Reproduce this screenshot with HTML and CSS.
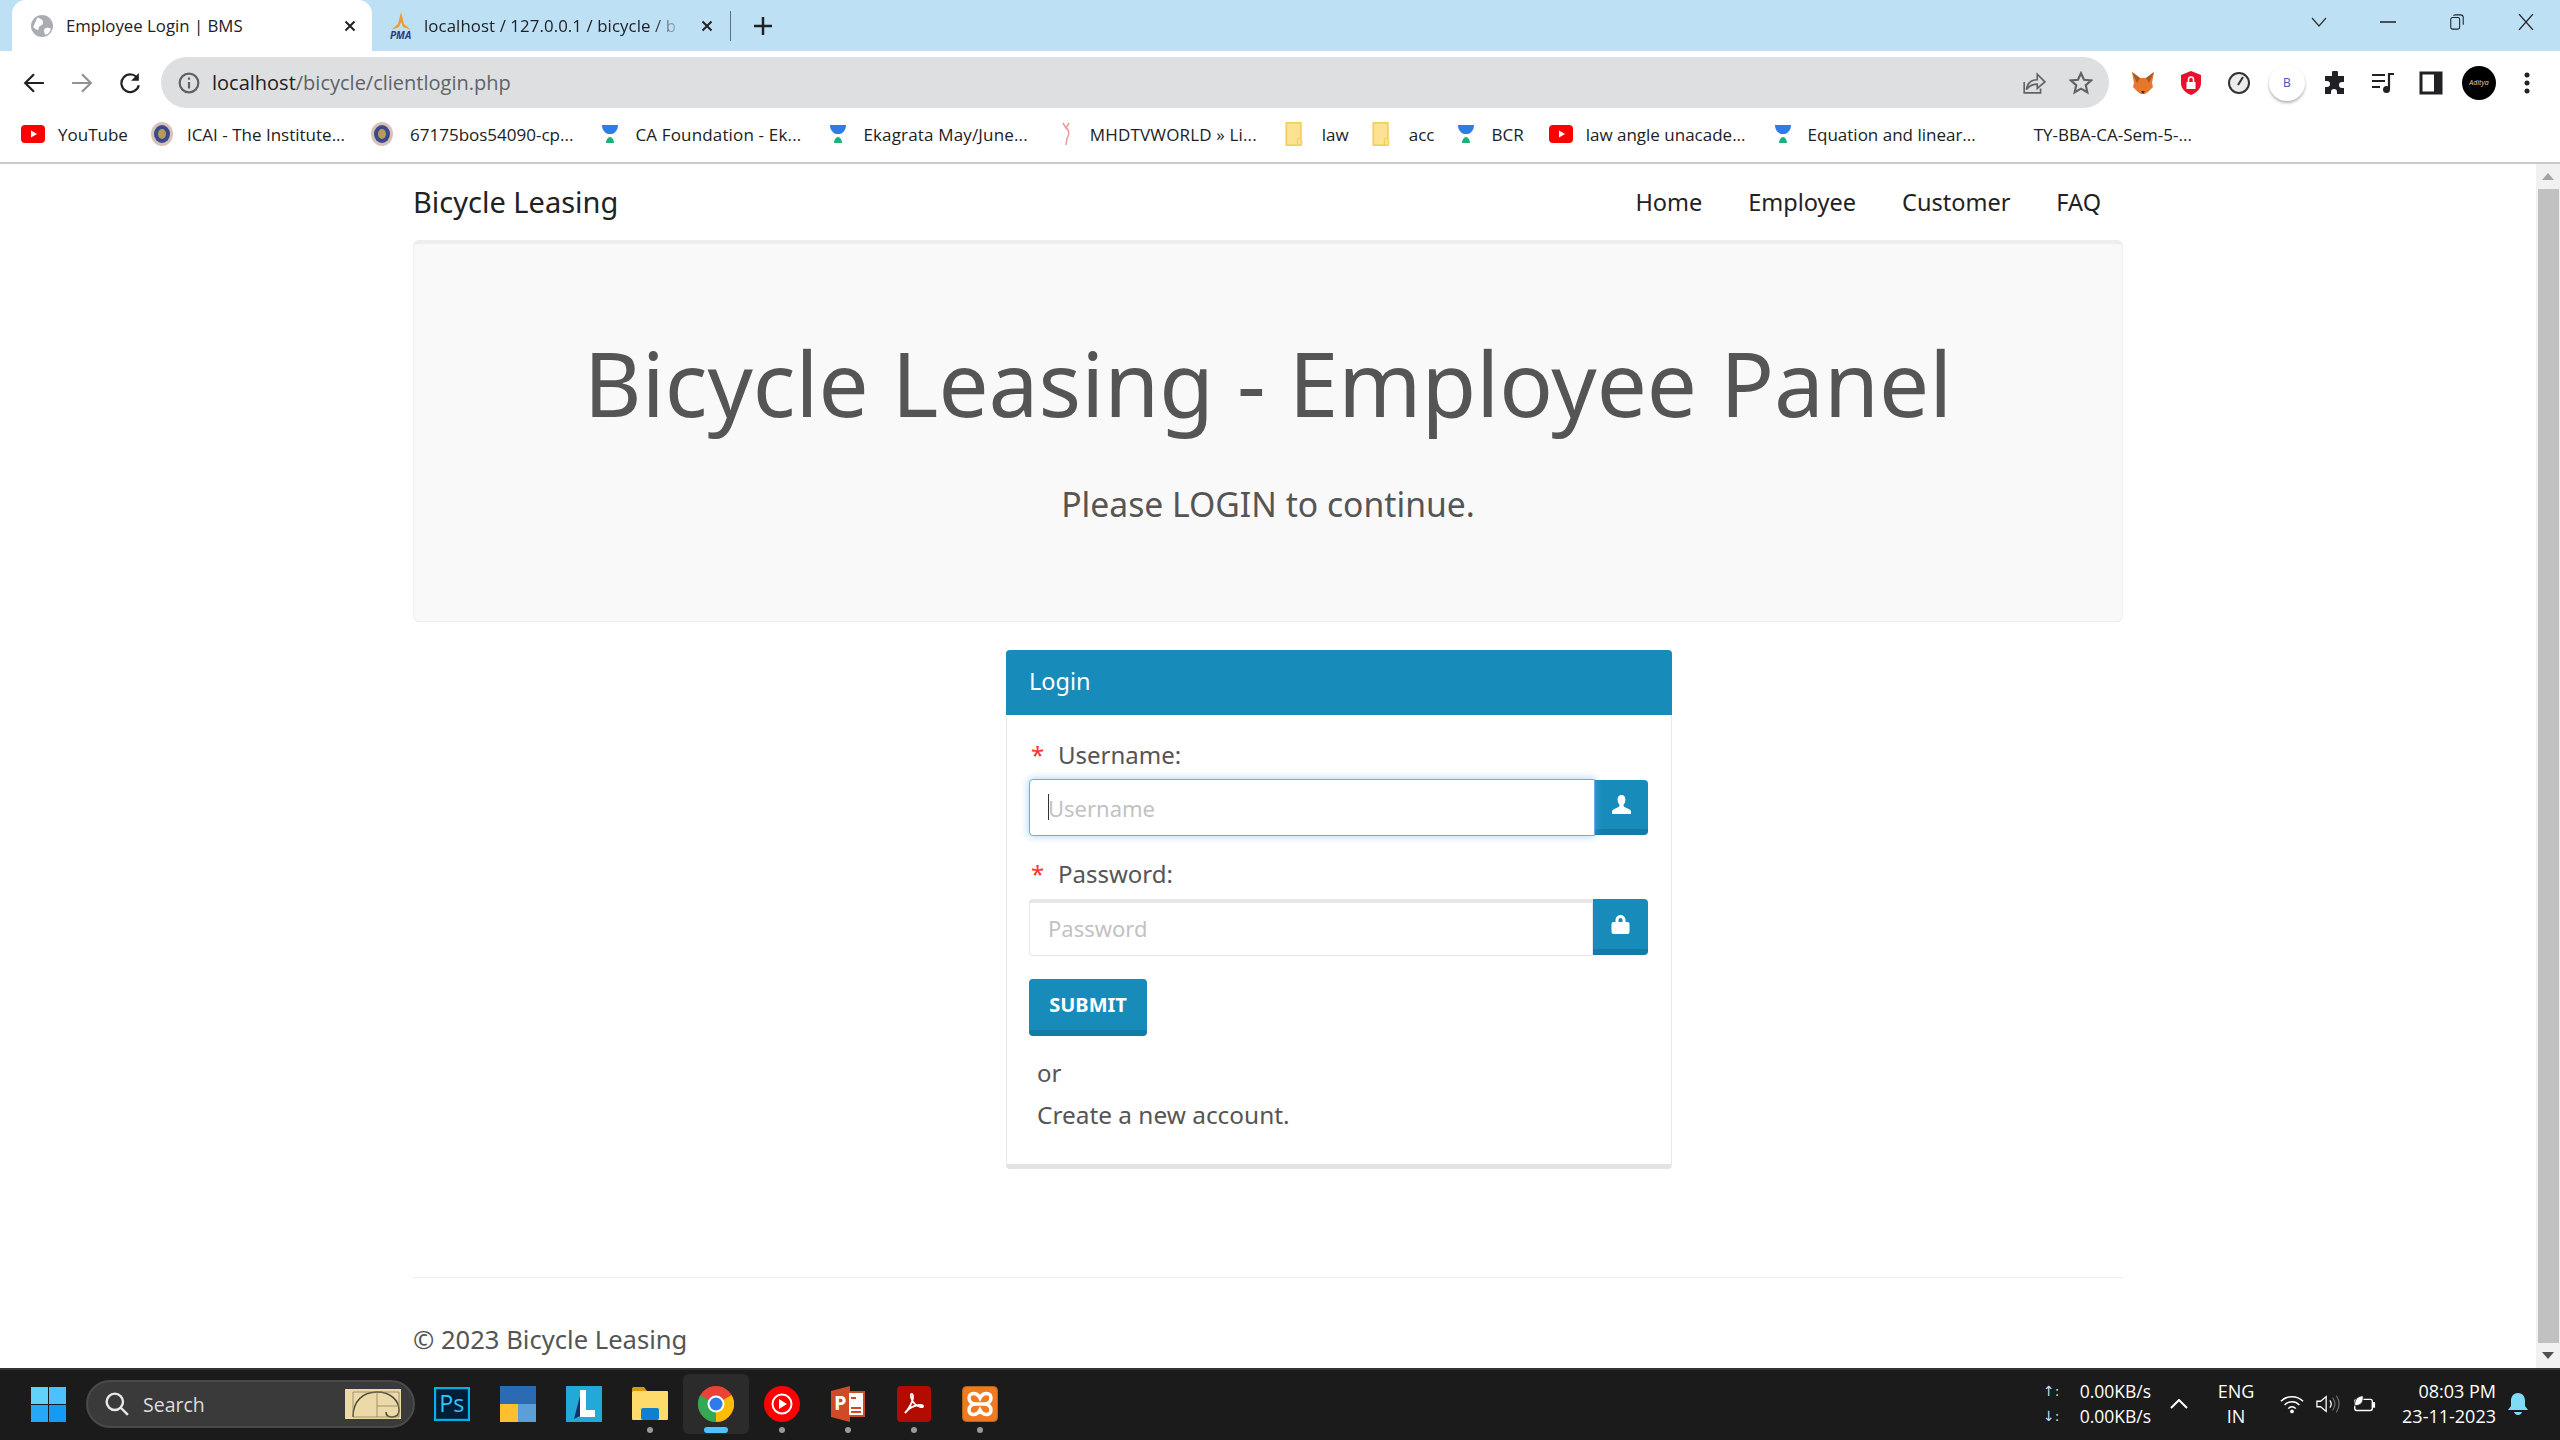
FILE: index.html
```html
<!DOCTYPE HTML>
<html lang="en">
<head>
    <meta charset="UTF-8">
    <meta name="viewport" content="width=device-width, initial-scale=1.0">
    <title>Employee Login | BMS</title>
    <link rel="stylesheet" href="styles.css">
</head>
<body>
    <svg class="defs" width="0" height="0">
        <symbol id="yt" viewBox="0 0 24 24"><rect y="3" width="24" height="18" rx="4" fill="#f00"/><path d="M10 8.5l6 3.5-6 3.5z" fill="#fff"/></symbol>
        <symbol id="cup" viewBox="0 0 24 24"><path d="M4 3h16c0 5-3 8-6 9h-4C7 11 4 8 4 3z" fill="#2f7be8"/><path d="M8 21c0-3 2-6 4-6s4 3 4 6z" fill="#1cb07a"/></symbol>
        <symbol id="seal" viewBox="0 0 24 24"><ellipse cx="12" cy="12" rx="11" ry="12" fill="#d8c2b8"/><ellipse cx="12" cy="12" rx="8" ry="9" fill="#3b4a8a"/><ellipse cx="12" cy="12" rx="4" ry="5" fill="#b79a55"/></symbol>
        <symbol id="folder" viewBox="0 0 20 28"><path d="M1 1h17v26H1z" fill="#fde293" stroke="#f2cf5e" stroke-width="2"/><rect x="14" y="19" width="5" height="8" rx="2" fill="#fde293" stroke="#f2cf5e" stroke-width="1.5"/></symbol>
    </svg>

    <div class="tabstrip">
        <div class="tab active">
            <svg class="favicon" viewBox="0 0 20 20"><circle cx="10" cy="10" r="10" fill="#a9adb2"/><path d="M6 2c3 2 5 2 5 5s-4 2-4 5-3 1-5-1M13 12c3-1 5 0 5 1-1 3-3 5-5 5-1-2-2-5 0-6z" fill="#fff"/></svg>
            <span class="tab-title">Employee Login | BMS</span>
            <svg class="tab-x" viewBox="0 0 12 12"><path d="M1.5 1.5l9 9M10.5 1.5l-9 9" stroke="#202124" stroke-width="2"/></svg>
        </div>
        <div class="tab">
            <svg class="favicon pma" viewBox="0 0 24 28"><path d="M12 0l3 12 7 6-8-3-2-5-2 5-8 3 7-6z" fill="#f29a2e"/><text x="1" y="27" class="pma-text">PMA</text></svg>
            <span class="tab-title fade">localhost / 127.0.0.1 / bicycle / b</span>
            <svg class="tab-x" viewBox="0 0 12 12"><path d="M1.5 1.5l9 9M10.5 1.5l-9 9" stroke="#202124" stroke-width="2"/></svg>
        </div>
        <div class="tab-sep"></div>
        <svg class="new-tab" viewBox="0 0 18 18"><path d="M9 0v18M0 9h18" stroke="#202124" stroke-width="2.5"/></svg>
        <div class="win-controls">
            <svg viewBox="0 0 16 10"><path d="M1 1l7 8 7-8" fill="none" stroke="#333" stroke-width="1.2"/></svg>
            <svg viewBox="0 0 16 10"><path d="M0 5h16" stroke="#222" stroke-width="1.5"/></svg>
            <svg viewBox="0 0 16 18"><rect x="1" y="4" width="10" height="13" rx="2" fill="none" stroke="#222" stroke-width="1.2"/><path d="M4 2q0-1 2-1h6q3 0 3 3v8" fill="none" stroke="#222" stroke-width="1.2"/></svg>
            <svg viewBox="0 0 16 16"><path d="M1 0l14 16M15 0L1 16" stroke="#222" stroke-width="1.2"/></svg>
        </div>
    </div>

    <div class="toolbar">
        <svg class="nav-btn" viewBox="0 0 20 20"><path d="M19 10H3M10 2l-8 8 8 8" fill="none" stroke="#202124" stroke-width="2"/></svg>
        <svg class="nav-btn" viewBox="0 0 20 20"><path d="M1 10h16M10 2l8 8-8 8" fill="none" stroke="#8f9296" stroke-width="2"/></svg>
        <svg class="nav-btn" viewBox="0 0 20 20"><path d="M17 6a8 8 0 1 0 1 6" fill="none" stroke="#202124" stroke-width="2"/><path d="M18 1v7h-7z" fill="#202124"/></svg>
        <div class="addressbar">
            <svg class="info" viewBox="0 0 20 20"><circle cx="10" cy="10" r="8.5" fill="none" stroke="#5f6368" stroke-width="2"/><path d="M10 9v6M10 5v2" stroke="#5f6368" stroke-width="2"/></svg>
            <span class="url"><b>localhost</b>/bicycle/clientlogin.php</span>
            <svg class="addr-icon" viewBox="0 0 22 22"><path d="M2 10v10h15v-4" fill="none" stroke="#5f6368" stroke-width="1.5"/><path d="M4 17c1-6 5-9 10-9V3l7 7-7 6v-4c-4 0-7 1-10 5z" fill="none" stroke="#5f6368" stroke-width="1.5"/></svg>
            <svg class="addr-icon" viewBox="0 0 22 22"><path d="M11 2l2.8 6 6.4.7-4.8 4.3 1.4 6.5L11 16.2l-5.8 3.3 1.4-6.5L1.800 8.700 8.200 8z" fill="none" stroke="#5f6368" stroke-width="2"/></svg>
        </div>
        <div class="extensions">
            <svg viewBox="0 0 24 24"><path d="M1 1l8 6h6l8-6-2 11 1 4-5 5-3 2h-4l-3-2-5-5 1-4z" fill="#e8772b"/><path d="M1 1l8 6-3 5zM23 1l-8 6 3 5z" fill="#a65b24"/><path d="M10 20h4l-2 3z" fill="#333"/></svg>
            <svg viewBox="0 0 24 24"><path d="M12 0l10 4v8c0 6-5 10-10 12C7 22 2 18 2 12V4z" fill="#e8112d"/><rect x="7.500" y="11" width="9" height="7" fill="#fff"/><path d="M9.500 11V8.500a2.500 2.500 0 0 1 5 0V11" fill="none" stroke="#fff" stroke-width="1.500"/></svg>
            <svg viewBox="0 0 24 24"><circle cx="12" cy="12" r="10" fill="#ececec" stroke="#333" stroke-width="2"/><path d="M11 14l5-8" stroke="#333" stroke-width="2"/></svg>
            <span class="ext-b">B</span>
            <svg viewBox="0 0 24 24"><path d="M9 2a3 3 0 0 1 6 0v3h6v6h-2a3 3 0 0 0 0 6h2v6h-7v-2a3 3 0 0 0-6 0v2H2v-7h2a3 3 0 0 0 0-6H2V5h7z" fill="#202124"/></svg>
            <svg viewBox="0 0 24 24"><path d="M1 4h13M1 10h13M1 16h8" stroke="#202124" stroke-width="2.200"/><path d="M18 18V3h5" fill="none" stroke="#202124" stroke-width="2.200"/><circle cx="15.500" cy="18.500" r="3.500" fill="#202124"/></svg>
            <svg viewBox="0 0 24 24"><rect x="2" y="2" width="20" height="20" fill="#fff" stroke="#202124" stroke-width="3"/><rect x="15" y="2" width="7" height="20" fill="#202124"/></svg>
            <span class="avatar"><i>Aditya</i></span>
            <svg viewBox="0 0 24 24"><circle cx="12" cy="4" r="2.500" fill="#202124"/><circle cx="12" cy="12" r="2.500" fill="#202124"/><circle cx="12" cy="20" r="2.500" fill="#202124"/></svg>
        </div>
    </div>

    <div class="bookmarks">
        <span class="bm close"><svg><use href="#yt"/></svg>YouTube</span>
        <span class="bm"><svg><use href="#seal"/></svg>ICAI - The Institute...</span>
        <span class="bm loose"><svg><use href="#seal"/></svg>67175bos54090-cp...</span>
        <span class="bm spaced"><svg><use href="#cup"/></svg>CA Foundation - Ek...</span>
        <span class="bm spaced"><svg><use href="#cup"/></svg>Ekagrata May/June...</span>
        <span class="bm spaced"><svg viewBox="0 0 24 24"><path d="M10 1l3 5M16 1l-3 5c4 2 3 8 1 10l-1 7" fill="none" stroke="#ec9a9a" stroke-width="1.500"/></svg>MHDTVWORLD » Li...</span>
        <span class="bm folder"><svg><use href="#folder"/></svg>law</span>
        <span class="bm folder"><svg><use href="#folder"/></svg>acc</span>
        <span class="bm"><svg><use href="#cup"/></svg>BCR</span>
        <span class="bm"><svg><use href="#yt"/></svg>law angle unacade...</span>
        <span class="bm"><svg><use href="#cup"/></svg>Equation and linear...</span>
        <span class="bm blank"><svg></svg>TY-BBA-CA-Sem-5-...</span>
    </div>

    <div class="viewport">
        <div class="page">
            <nav class="navbar">
                <a class="brand">Bicycle Leasing</a>
                <ul class="nav-links">
                    <li>Home</li>
                    <li>Employee</li>
                    <li>Customer</li>
                    <li>FAQ</li>
                </ul>
            </nav>

            <div class="jumbotron">
                <h1>Bicycle Leasing - Employee Panel</h1>
                <p>Please LOGIN to continue.</p>
            </div>

            <div class="panel">
                <div class="panel-heading">Login</div>
                <div class="panel-body">
                    <label class="field-label"><span class="req">*</span>Username:</label>
                    <div class="input-group">
                        <div class="input-wrap">
                            <input class="form-input focused" type="text" placeholder="Username">
                            <span class="caret"></span>
                        </div>
                        <span class="addon">
                            <svg viewBox="0 0 19 19"><path d="M9.500 0c2.600 0 3.900 2 3.900 4.500 0 2.500-1 4.500-2 5.500 0 1.500 1 2 3 3 2.600 1 4.600 2 4.600 3.500V19H0v-2.500C0 15 2 14 4.600 13c2-1 3-1.500 3-3-1-1-2-3-2-5.500C5.600 2 6.900 0 9.500 0z" fill="#fff"/></svg>
                        </span>
                    </div>
                    <label class="field-label second"><span class="req">*</span>Password:</label>
                    <div class="input-group">
                        <div class="input-wrap">
                            <input class="form-input thick" type="password" placeholder="Password">
                        </div>
                        <span class="addon wide">
                            <svg viewBox="0 0 18 19"><path d="M4 7V5a5 5 0 0 1 10 0v2h2q2 0 2 2v8q0 2-2 2H2q-2 0-2-2V9q0-2 2-2zm3 0h4V5a2 2 0 0 0-4 0z" fill="#fff"/></svg>
                        </span>
                    </div>
                    <button class="btn-submit" type="button">SUBMIT</button>
                    <p class="or">or</p>
                    <p class="create">Create a new account.</p>
                </div>
            </div>

            <footer class="footer">
                <p>© 2023 Bicycle Leasing</p>
            </footer>
        </div>
        <div class="scrollbar">
            <span class="arrow up"></span>
            <div class="thumb"></div>
            <span class="arrow down"></span>
        </div>
    </div>

    <div class="taskbar">
        <svg class="start" viewBox="0 0 35 35"><rect width="17" height="17" fill="#62d2fb"/><rect x="18" width="17" height="17" fill="#4bc2fb"/><rect y="18" width="17" height="17" fill="#27a8f7"/><rect x="18" y="18" width="17" height="17" fill="#139bf5"/></svg>
        <div class="search">
            <svg viewBox="0 0 22 22"><circle cx="9" cy="9" r="7.500" fill="none" stroke="#e8e8e8" stroke-width="2.200"/><path d="M14 14l7 7" stroke="#e8e8e8" stroke-width="2.200"/></svg>
            <span>Search</span>
            <svg class="doodle" viewBox="0 0 56 30"><rect width="56" height="30" fill="#ecd9a8"/><path d="M8 28C8 12 18 3 32 3s22 9 22 18c0 5-3 7-7 7s-6-2-6-5" fill="none" stroke="#4c4638" stroke-width="1.500"/><path d="M8 3h46v25H8zM32 3v25M32 17h22" fill="none" stroke="#8b8163" stroke-width="0.800"/></svg>
        </div>
        <div class="task-icons">
            <span class="task"><svg viewBox="0 0 34 32"><rect x="1" y="1" width="32" height="30" fill="#001e36" stroke="#00b4f0" stroke-width="2"/><text x="5" y="24" class="ps-text">Ps</text></svg></span>
            <span class="task"><svg viewBox="0 0 36 36"><rect width="36" height="18" fill="#2b6bb3"/><rect y="18" width="18" height="18" fill="#fcc02e"/><rect x="18" y="18" width="18" height="18" fill="#5b9fd8"/></svg></span>
            <span class="task"><svg viewBox="0 0 36 36"><rect width="36" height="36" fill="#22a9d8"/><path d="M8 33l6-23v20z" fill="#14306e"/><path d="M14 4h6v20h9v7H14z" fill="#fff"/></svg></span>
            <span class="task dot"><svg viewBox="0 0 36 36"><path d="M0 3q0-2 2-2h10l3 4h-15z" fill="#d69a12"/><rect y="5" width="36" height="29" rx="1" fill="#fedb6a"/><rect x="9" y="22" width="18" height="12" rx="2" fill="#0f7fd0"/></svg></span>
            <span class="task current"><svg viewBox="0 0 36 36"><circle cx="18" cy="18" r="18" fill="#ea4335"/><path d="M18 18L2.400 9A18 18 0 0 0 18 36z" fill="#34a853"/><path d="M18 18l15.600-9A18 18 0 0 1 18 36z" fill="#fbbc05"/><circle cx="18" cy="18" r="8.500" fill="#fff"/><circle cx="18" cy="18" r="6.500" fill="#2f7bea"/></svg></span>
            <span class="task dot"><svg viewBox="0 0 36 36"><circle cx="18" cy="18" r="18" fill="#f00"/><circle cx="18" cy="18" r="9.500" fill="none" stroke="#fff" stroke-width="2"/><path d="M15 13l8 5-8 5z" fill="#fff"/></svg></span>
            <span class="task dot"><svg viewBox="0 0 34 36"><path d="M0 5L19 0v36L0 31z" fill="#d04a26"/><rect x="17" y="6" width="16" height="24" fill="#fff" stroke="#d04a26" stroke-width="2"/><path d="M20 12h5M20 22h10M20 26h10" stroke="#d04a26" stroke-width="2"/><text x="3" y="24" class="ppt-text">P</text></svg></span>
            <span class="task dot"><svg viewBox="0 0 34 36"><rect width="34" height="36" rx="4" fill="#b30b00"/><path d="M8 27c3-3 8-11 8-16 0-4-3-4-2 0 1 5 5 9 9 10 4 1 4-2 0-2-5 0-12 3-15 8z" fill="none" stroke="#fff" stroke-width="1.800"/></svg></span>
            <span class="task dot"><svg viewBox="0 0 36 36"><rect x="0.500" y="0.500" width="35" height="35" rx="4" fill="#ef7a20" stroke="#b5651d"/><path d="M18 12C15 6 7 6 7 12C7 16 10 18 14 18C10 18 7 20 7 24C7 30 15 30 18 24C21 30 29 30 29 24C29 20 26 18 22 18C26 18 29 16 29 12C29 6 21 6 18 12ZM14 18H22" fill="none" stroke="#fff" stroke-width="3.500"/></svg></span>
        </div>
        <div class="tray">
            <div class="netspeed">
                <div><span class="net-arrow">↑:</span><span>0.00KB/s</span></div>
                <div><span class="net-arrow">↓:</span><span>0.00KB/s</span></div>
            </div>
            <svg class="tray-chev" viewBox="0 0 18 10"><path d="M1 9l8-8 8 8" fill="none" stroke="#fff" stroke-width="2"/></svg>
            <div class="lang">ENG<br>IN</div>
            <svg class="tray-icon" viewBox="0 0 26 20"><path d="M1 7a17 17 0 0 1 24 0M5 11a11 11 0 0 1 16 0M9 15a5 5 0 0 1 8 0" fill="none" stroke="#fff" stroke-width="1.600"/><circle cx="13" cy="18" r="2" fill="#fff"/></svg>
            <svg class="tray-icon" viewBox="0 0 26 20"><path d="M1 7h4l6-5v16l-6-5H1z" fill="none" stroke="#fff" stroke-width="1.400"/><path d="M15 6q3 4 0 8" fill="none" stroke="#fff" stroke-width="1.400"/><path d="M18 3q5 7 0 14M22 1q6 9 0 18" fill="none" stroke="#666" stroke-width="1.400"/></svg>
            <svg class="tray-icon" viewBox="0 0 26 20"><rect x="3" y="5" width="19" height="12" rx="2" fill="none" stroke="#fff" stroke-width="1.500"/><rect x="22" y="8" width="3" height="6" fill="#fff"/><path d="M3 12C2 6 6 1 12 1c1 6-2 11-9 11z" fill="#fff" stroke="#1b1b1b"/></svg>
            <div class="clock">08:03 PM<br>23-11-2023</div>
            <svg class="bell" viewBox="0 0 20 24"><path d="M10 1c5 0 7 4 7 8v5l3 4H0l3-4V9c0-4 2-8 7-8z" fill="#7fdcf7"/><path d="M6 20h8q-1 3-4 3t-4-3z" fill="#7fdcf7"/></svg>
        </div>
    </div>
</body>
</html>
```

FILE: styles.css
```css
* {
    box-sizing: border-box;
}

html, body {
    margin: 0;
    height: 1440px;
    overflow: hidden;
}

body {
    display: flex;
    flex-direction: column;
    background-color: #fff;
    color: #555;
    font-family: "Noto Sans", "DejaVu Sans", sans-serif;
}

.defs {
    position: absolute;
}

/* browser chrome */
.tabstrip {
    display: flex;
    align-items: center;
    height: 51px;
    padding-left: 12px;
    background-color: #bee0f5;
    color: #202124;
    font-family: "Open Sans", sans-serif;
    font-size: 16.800px;
}

.tab {
    display: flex;
    align-items: center;
    width: 360px;
    height: 51px;
    padding: 0 16px 0 19px;
    border-radius: 14px 14px 0 0;
}

.tab.active {
    background-color: #fff;
}

.tab + .tab {
    padding: 0 17px 0 17px;
    width: 358px;
}

.favicon {
    width: 22px;
    height: 22px;
    margin-right: 13px;
    flex: none;
}

.favicon.pma {
    width: 24px;
    height: 28px;
    margin-right: 11px;
}

.pma-text {
    font-size: 10px;
    font-style: italic;
    font-weight: bold;
    fill: #2c3a78;
}

.tab-title {
    flex: 1;
    overflow: hidden;
    white-space: nowrap;
}

.tab-title.fade {
    letter-spacing: 0.1px;
    -webkit-mask-image: linear-gradient(to right, #000 88%, transparent);
    mask-image: linear-gradient(to right, #000 88%, transparent);
}

.tab-x {
    width: 12px;
    height: 12px;
    margin-left: 18px;
    flex: none;
}

.tab-sep {
    width: 1px;
    height: 30px;
    background-color: #60707c;
}

.new-tab {
    width: 18px;
    height: 18px;
    margin-left: 23px;
}

.win-controls {
    display: flex;
    align-items: center;
    gap: 53px;
    margin-left: auto;
    padding-right: 26px;
    height: 44px;
    margin-bottom: 7px;
}

.win-controls svg {
    width: 16px;
    height: 16px;
}

.toolbar {
    display: flex;
    align-items: center;
    height: 57px;
    padding: 6px 0 0 23px;
    background-color: #fff;
}

.nav-btn {
    width: 22px;
    height: 22px;
    margin-right: 26px;
    flex: none;
}

.addressbar {
    display: flex;
    align-items: center;
    width: 1948px;
    height: 51px;
    margin-left: -6px;
    padding: 0 16px 0 17px;
    border-radius: 26px;
    background-color: #dedfe1;
}

.info {
    width: 22px;
    height: 22px;
    margin-right: 12px;
}

.url {
    flex: 1;
    font-family: "Open Sans", sans-serif;
    font-size: 20px;
    color: #5f6368;
}

.url b {
    font-weight: 400;
    color: #202124;
}

.addr-icon {
    width: 24px;
    height: 24px;
    margin-left: 23px;
}

.extensions {
    display: flex;
    align-items: center;
    gap: 24px;
    margin-left: 22px;
}

.extensions svg {
    width: 24px;
    height: 24px;
    flex: none;
}

.ext-b {
    display: flex;
    align-items: center;
    justify-content: center;
    width: 36px;
    height: 36px;
    margin: 0 -6px;
    border-radius: 50%;
    background-color: #fff;
    box-shadow: 0 2px 3px rgba(0, 0, 0, 0.3);
    color: #4a55c8;
    font-size: 12px;
}

.avatar {
    display: flex;
    align-items: center;
    justify-content: center;
    width: 34px;
    height: 34px;
    margin: 0 -5px;
    border-radius: 50%;
    background-color: #000;
    color: #ccc;
    font-size: 7px;
}

.bookmarks {
    display: flex;
    align-items: center;
    gap: 25px;
    height: 56px;
    padding: 0 0 2px 21px;
    border-bottom: 2px solid #c8c9cb;
    background-color: #fff;
    color: #202124;
    font-family: "Open Sans", sans-serif;
    font-size: 17px;
    white-space: nowrap;
}

.bm {
    display: flex;
    align-items: center;
    gap: 13px;
}

.bm svg {
    width: 24px;
    height: 24px;
    flex: none;
}

.bm.close {
    margin-right: -3px;
}

.bm.loose {
    gap: 16px;
}

.bm.spaced {
    letter-spacing: 0.16px;
}

.bm.folder {
    gap: 16px;
    margin-right: -5px;
}

.bm.blank {
    gap: 9px;
}

/* page content */
.viewport {
    display: flex;
    height: 1204px;
}

.page {
    flex: 1;
    padding: 0 413px;
}

.navbar {
    display: flex;
    align-items: center;
    justify-content: space-between;
    height: 76px;
    padding-right: 22px;
    color: #222;
}

.brand {
    font-size: 29px;
    margin-bottom: 2px;
}

.nav-links {
    display: flex;
    gap: 46px;
    margin: 0;
    padding: 0;
    list-style: none;
    font-size: 23.500px;
}

.jumbotron {
    height: 382px;
    padding-top: 79px;
    border: 1px solid #eee;
    border-top-width: 4px;
    border-radius: 6px;
    background-color: #f9f9f9;
    text-align: center;
}

.jumbotron h1 {
    margin: 0;
    font-size: 89px;
    font-weight: 400;
    line-height: 120px;
    color: #555;
}

.jumbotron p {
    margin: 38px 0 0;
    font-size: 33.700px;
    line-height: 46px;
    color: #555;
}

.panel {
    width: 666px;
    height: 519px;
    margin: 28px 0 1px 593px;
    border: 1px solid #e8e8e8;
    border-bottom: 5px solid #e3e3e3;
    border-top: 0;
    border-radius: 4px;
    font-size: 24px;
}

.panel-heading {
    height: 65px;
    margin: 0 -1px;
    padding-left: 23px;
    border-radius: 4px 4px 0 0;
    background-color: #178cbb;
    color: #fff;
    font-size: 23.500px;
    line-height: 63px;
}

.panel-body {
    padding: 22px 23px 0 22px;
}

.field-label {
    display: block;
    height: 36px;
    margin-bottom: 6px;
    line-height: 36px;
    color: #555;
}

.field-label.second {
    margin-top: 20px;
    margin-bottom: 7px;
}

.req {
    display: inline-block;
    width: 29px;
    padding-left: 2px;
    color: #f33;
}

.input-group {
    display: flex;
    height: 57px;
}

.input-wrap {
    position: relative;
    flex: 1;
}

.form-input {
    display: block;
    width: 100%;
    height: 57px;
    padding: 0 18px;
    border: 1px solid #e6e6e6;
    border-radius: 4px 0 0 4px;
    outline: none;
    background-color: #fff;
    font-family: inherit;
    font-size: 22px;
}

.form-input.thick {
    padding-bottom: 3px;
    border-top-width: 4px;
}

.form-input::placeholder {
    color: #c2c2c2;
}

.form-input.focused {
    border: 1px solid #66afe9;
    box-shadow: 0 0 8px rgba(102, 175, 233, 0.6);
}

.caret {
    position: absolute;
    left: 19px;
    top: 15px;
    width: 1px;
    height: 26px;
    background-color: #333;
}

.addon {
    display: flex;
    align-items: center;
    justify-content: center;
    flex: none;
    width: 53px;
    height: 55px;
    margin-top: 1px;
    border-bottom: 6px solid #137ca6;
    border-radius: 0 4px 4px 0;
    background-color: #178cbb;
}

.addon.wide {
    width: 55px;
    height: 56px;
    margin-top: 0;
}

.addon svg {
    width: 19px;
    height: 19px;
}

.btn-submit {
    display: block;
    width: 118px;
    height: 57px;
    margin-top: 23px;
    padding: 0;
    border: 0;
    border-bottom: 6px solid #137ca6;
    border-radius: 4px;
    background-color: #178cbb;
    color: #fff;
    font-family: inherit;
    font-size: 20px;
    font-weight: 700;
}

.or,
.create {
    margin: 0;
    padding-left: 8px;
    line-height: 36px;
    color: #555;
}

.or {
    margin-top: 19px;
}

.create {
    margin-top: 6px;
    font-size: 24.400px;
}

.footer {
    margin-top: 108px;
    border-top: 1px solid #eee;
}

.footer p {
    margin: 43px 0 0;
    font-size: 25.600px;
    line-height: 38px;
    color: #555;
}

.scrollbar {
    display: flex;
    flex-direction: column;
    align-items: center;
    width: 24px;
    background-color: #f1f1f1;
}

.arrow {
    width: 0;
    height: 0;
    margin: 9px 0;
    border-left: 6px solid transparent;
    border-right: 6px solid transparent;
}

.arrow.up {
    border-bottom: 7px solid #a3a3a3;
}

.arrow.down {
    border-top: 7px solid #505050;
}

.thumb {
    flex: 1;
    align-self: stretch;
    margin: 0 1px 0 2px;
    background-color: #c1c1c1;
}

/* taskbar */
.taskbar {
    display: flex;
    align-items: center;
    height: 72px;
    padding: 0 0 2px 31px;
    border-top: 2px solid #333;
    background-color: #1b1b1b;
    color: #fff;
    font-family: "Open Sans", sans-serif;
}

.start {
    width: 35px;
    height: 35px;
    flex: none;
}

.search {
    display: flex;
    align-items: center;
    width: 329px;
    height: 48px;
    margin-left: 20px;
    padding: 0 12px 0 17px;
    border: 2px solid #4a4a4a;
    border-radius: 24px;
    background-color: #3a3a3a;
    color: #ddd;
    font-size: 19.500px;
}

.search svg {
    width: 24px;
    height: 24px;
}

.search span {
    flex: 1;
    margin-left: 14px;
}

.search .doodle {
    width: 56px;
    height: 30px;
}

.task-icons {
    display: flex;
    margin-left: 4px;
}

.task {
    position: relative;
    display: flex;
    align-items: center;
    justify-content: center;
    width: 66px;
    height: 60px;
    border-radius: 6px;
}

.task svg {
    width: 36px;
    height: 36px;
}

.task.dot::after,
.task.current::after {
    content: "";
    position: absolute;
    bottom: 1px;
    left: 30px;
    width: 6px;
    height: 6px;
    border-radius: 50%;
    background-color: #999;
}

.task.current {
    background-color: #2b2b2b;
}

.task.current::after {
    left: 21px;
    width: 24px;
    border-radius: 3px;
    background-color: #4cc2ff;
}

.ps-text {
    font-size: 22px;
    fill: #31c5ff;
}

.ppt-text {
    font-size: 20px;
    font-weight: bold;
    fill: #fff;
}

.tray {
    display: flex;
    align-items: center;
    margin-left: auto;
    padding-right: 32px;
    font-size: 18px;
    line-height: 25px;
}

.netspeed > div {
    display: flex;
    justify-content: space-between;
    width: 108px;
    font-size: 17.500px;
}

.net-arrow {
    font-family: "DejaVu Sans", sans-serif;
    font-size: 14px;
    color: #cde;
}

.tray-chev {
    width: 18px;
    height: 10px;
    margin-left: 19px;
}

.lang {
    width: 50px;
    margin-left: 23px;
    text-align: center;
}

.tray-icon {
    width: 24px;
    height: 20px;
    margin-left: 12px;
}

.lang + .tray-icon {
    margin-left: 19px;
}

.clock {
    margin-left: 26px;
    text-align: right;
}

.bell {
    width: 20px;
    height: 24px;
    margin-left: 12px;
}
```
